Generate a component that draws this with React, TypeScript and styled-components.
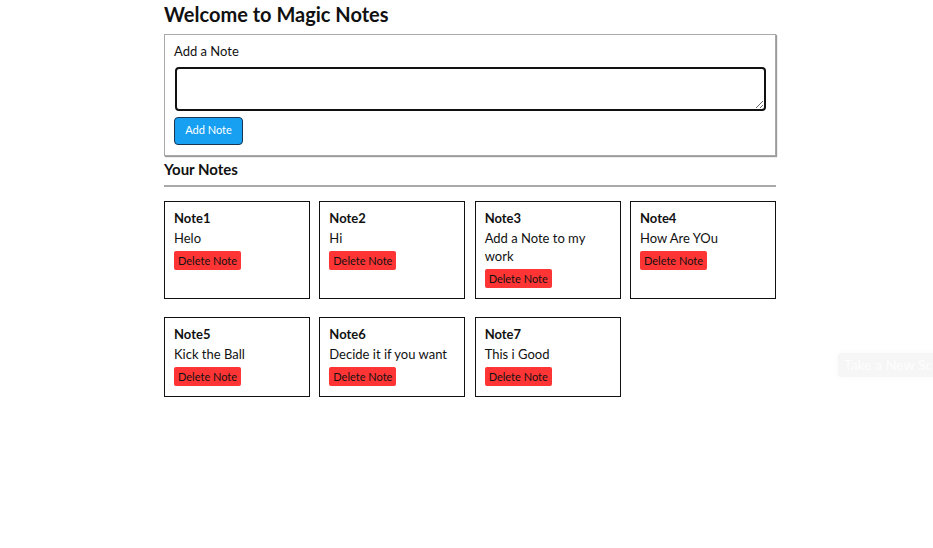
import React from "react";
import styled, { createGlobalStyle } from "styled-components";

const Global = createGlobalStyle`
  html, body { margin: 0; padding: 0; background: #fff; }
  body { font-family: Lato, "Open Sans", sans-serif; color: #111; overflow: hidden; }
  * { box-sizing: border-box; }
`;

const Container = styled.div`
  width: 612px;
  margin-left: 164px;
  display: flex;
  flex-direction: column;
`;

const Title = styled.h1`
  margin: 0;
  padding-top: 2px;
  font-size: 20px;
  line-height: 24px;
  font-weight: 700;
  color: #111;
`;

const AddBox = styled.div`
  margin-top: 8px;
  border: 1px solid #a9a9a9;
  box-shadow: 1px 1px 1px #9a9a9a;
  padding: 7px 10px 10px 9px;
  display: flex;
  flex-direction: column;
  align-items: flex-start;
`;

const Label = styled.label`
  font-size: 13px;
  line-height: 18px;
  color: #111;
`;

const TextArea = styled.textarea`
  margin-top: 7px;
  margin-left: 1px;
  width: 591px;
  height: 44px;
  border: 2px solid #111;
  border-radius: 4px;
  resize: vertical;
  font-family: inherit;
  outline: none;
`;

const AddButton = styled.button`
  margin-top: 6px;
  width: 69px;
  height: 28px;
  background: #17a0f2;
  color: #fff;
  border: 1px solid #1b3550;
  border-radius: 4px;
  font-family: Lato, sans-serif;
  font-size: 11px;
  line-height: 24px;
  padding: 0 0 2px;
`;

const SectionTitle = styled.h2`
  margin: 3px 0 0;
  font-size: 15px;
  line-height: 20px;
  font-weight: 700;
  color: #111;
`;

const Rule = styled.div`
  margin-top: 6px;
  height: 2px;
  background: #a9a9a9;
`;

const Grid = styled.div`
  margin-top: 14px;
  display: grid;
  grid-template-columns: repeat(4, 146px);
  justify-content: space-between;
  row-gap: 18px;
`;

const Card = styled.div`
  border: 1px solid #111;
  padding: 7px 9px 10px;
  display: flex;
  flex-direction: column;
  align-items: flex-start;
`;

const CardTitle = styled.div`
  font-size: 13px;
  line-height: 18px;
  font-weight: 700;
  color: #111;
`;

const CardText = styled.div`
  margin-top: 2px;
  font-size: 13px;
  line-height: 18px;
  color: #111;
`;

const DeleteButton = styled.button`
  margin-top: 4px;
  height: 19px;
  padding: 0 4px;
  background: #ff3535;
  color: #111;
  border: none;
  border-radius: 2px;
  font-family: Lato, sans-serif;
  font-size: 11px;
  line-height: 19px;
`;

const Floating = styled.div`
  position: fixed;
  left: 838px;
  top: 353px;
  height: 24px;
  padding: 0 6px;
  background: #f6f6f6;
  color: #fdfdfd;
  border-radius: 3px;
  font-size: 14px;
  line-height: 24px;
  white-space: nowrap;
  box-shadow: 0 0 6px rgba(0, 0, 0, 0.03);
`;

const notes = [
  { title: "Note1", text: "Helo" },
  { title: "Note2", text: "Hi" },
  { title: "Note3", text: "Add a Note to my work" },
  { title: "Note4", text: "How Are YOu" },
  { title: "Note5", text: "Kick the Ball" },
  { title: "Note6", text: "Decide it if you want" },
  { title: "Note7", text: "This i Good" },
];

export default function App() {
  return (
    <>
      <Global />
      <Container>
        <Title>Welcome to Magic Notes</Title>
        <AddBox>
          <Label>Add a Note</Label>
          <TextArea />
          <AddButton>Add Note</AddButton>
        </AddBox>
        <SectionTitle>Your Notes</SectionTitle>
        <Rule />
        <Grid>
          {notes.map((n) => (
            <Card key={n.title}>
              <CardTitle>{n.title}</CardTitle>
              <CardText>{n.text}</CardText>
              <DeleteButton>Delete Note</DeleteButton>
            </Card>
          ))}
        </Grid>
      </Container>
      <Floating>Take a New Screenshot</Floating>
    </>
  );
}
